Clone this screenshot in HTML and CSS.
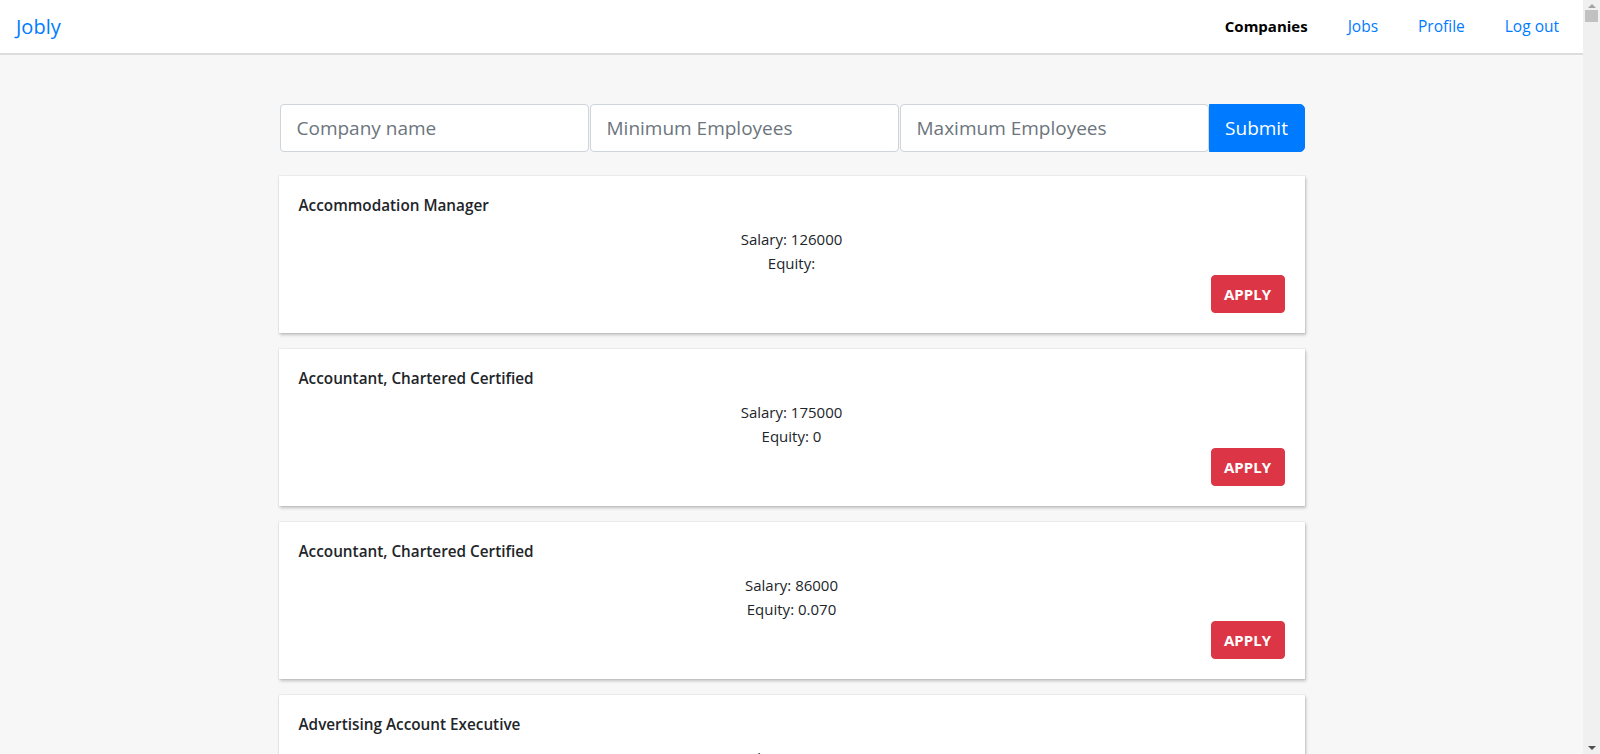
FILE: index.html
```html
<!DOCTYPE html>
<html lang="en">
<head>
<meta charset="utf-8">
<title>Jobly</title>
<link rel="stylesheet" href="styles.css">
</head>
<body>
<nav class="navbar">
  <a class="brand" href="#">Jobly</a>
  <ul class="nav">
    <li><a class="nav-link active" href="#">Companies</a></li>
    <li><a class="nav-link" href="#">Jobs</a></li>
    <li><a class="nav-link" href="#">Profile</a></li>
    <li><a class="nav-link" href="#">Log out</a></li>
  </ul>
</nav>
<main class="container">
  <form class="search">
    <input class="field" type="text" placeholder="Company name">
    <input class="field" type="text" placeholder="Minimum Employees">
    <input class="field" type="text" placeholder="Maximum Employees">
    <button class="submit" type="button">Submit</button>
  </form>
  <div class="card">
    <div class="card-title">Accommodation Manager</div>
    <p class="info">Salary: 126000</p>
    <p class="info">Equity: </p>
    <div class="actions"><button class="apply" type="button">APPLY</button></div>
  </div>
  <div class="card">
    <div class="card-title">Accountant, Chartered Certified</div>
    <p class="info">Salary: 175000</p>
    <p class="info">Equity: 0</p>
    <div class="actions"><button class="apply" type="button">APPLY</button></div>
  </div>
  <div class="card">
    <div class="card-title">Accountant, Chartered Certified</div>
    <p class="info">Salary: 86000</p>
    <p class="info">Equity: 0.070</p>
    <div class="actions"><button class="apply" type="button">APPLY</button></div>
  </div>
  <div class="card">
    <div class="card-title">Advertising Account Executive</div>
    <p class="info">Salary: 130000</p>
    <p class="info">Equity: 0</p>
    <div class="actions"><button class="apply" type="button">APPLY</button></div>
  </div>
  <div class="card">
    <div class="card-title">Advertising Copywriter</div>
    <p class="info">Salary: 94000</p>
    <p class="info">Equity: 0.020</p>
    <div class="actions"><button class="apply" type="button">APPLY</button></div>
  </div>
</main>
<div class="scrollbar" aria-hidden="true">
  <span class="arrow-up"></span>
  <span class="thumb"></span>
  <span class="arrow-down"></span>
</div>
</body>
</html>
```

FILE: styles.css
```css
* {
  box-sizing: border-box;
}

html, body {
  margin: 0;
  padding: 0;
}

body {
  margin-right: 17px;
  background: #f7f7f7;
  color: #212529;
  font-family: "Open Sans", "Noto Sans", "Liberation Sans", sans-serif;
  font-size: 16px;
  line-height: 1.5;
}

.navbar {
  display: flex;
  align-items: center;
  justify-content: space-between;
  height: 55px;
  padding: 0 24px 0 16px;
  background: #ffffff;
  border-bottom: 2px solid #dcdcdc;
}

.brand {
  color: #007bff;
  font-size: 20px;
  text-decoration: none;
}

.nav {
  display: flex;
  gap: 40px;
  list-style: none;
  margin: 0;
  padding: 0;
}

.nav-link {
  color: #007bff;
  text-decoration: none;
  font-size: 15.5px;
}

.nav-link.active {
  color: #000000;
  font-weight: 700;
  font-size: 15px;
}

.container {
  width: 1026px;
  margin: 0 auto;
  padding: 49px 0 40px;
}

.search {
  display: flex;
  gap: 1px;
  margin: 0 0 24px 1px;
}

.field {
  flex: 1;
  min-width: 0;
  height: 48px;
  padding: 8px 16px;
  border: 1px solid #ced4da;
  border-radius: 4px;
  background: #fff;
  font-family: inherit;
  font-size: 19px;
  color: #495057;
}

.field::placeholder {
  color: #6c757d;
}

.submit {
  width: 96px;
  height: 48px;
  margin-left: -1px;
  border: 1px solid #007bff;
  border-radius: 0 5px 5px 0;
  background: #007bff;
  color: #fff;
  font-family: inherit;
  font-size: 19px;
}

.card {
  background: #fff;
  box-shadow: 0 0 0 1px rgba(0, 0, 0, 0.04), 1px 2px 3px rgba(0, 0, 0, 0.22);
  padding: 20px;
  margin-bottom: 16px;
}

.card-title {
  font-weight: 600;
  font-size: 15.3px;
  line-height: 19px;
  margin-bottom: 12px;
}

.info {
  margin: 0;
  text-align: center;
  line-height: 24px;
  font-size: 15px;
}

.actions {
  display: flex;
  justify-content: flex-end;
}

.apply {
  height: 38px;
  width: 74px;
  border: 1px solid #dc3545;
  border-radius: 4px;
  background: #dc3545;
  color: #fff;
  font-family: inherit;
  font-weight: 700;
  font-size: 15px;
}

.scrollbar {
  position: fixed;
  top: 0;
  right: 0;
  bottom: 0;
  width: 17px;
  background: #f0f0f0;
  display: flex;
  flex-direction: column;
  align-items: center;
}

.arrow-up {
  margin-top: 4px;
  width: 0;
  height: 0;
  border-left: 4px solid transparent;
  border-right: 4px solid transparent;
  border-bottom: 4px solid #a3a3a3;
}

.thumb {
  margin-top: 2px;
  width: 13px;
  height: 12px;
  background: #c1c1c1;
}

.arrow-down {
  margin-top: auto;
  margin-bottom: 4px;
  width: 0;
  height: 0;
  border-left: 4px solid transparent;
  border-right: 4px solid transparent;
  border-top: 4px solid #505050;
}
```
